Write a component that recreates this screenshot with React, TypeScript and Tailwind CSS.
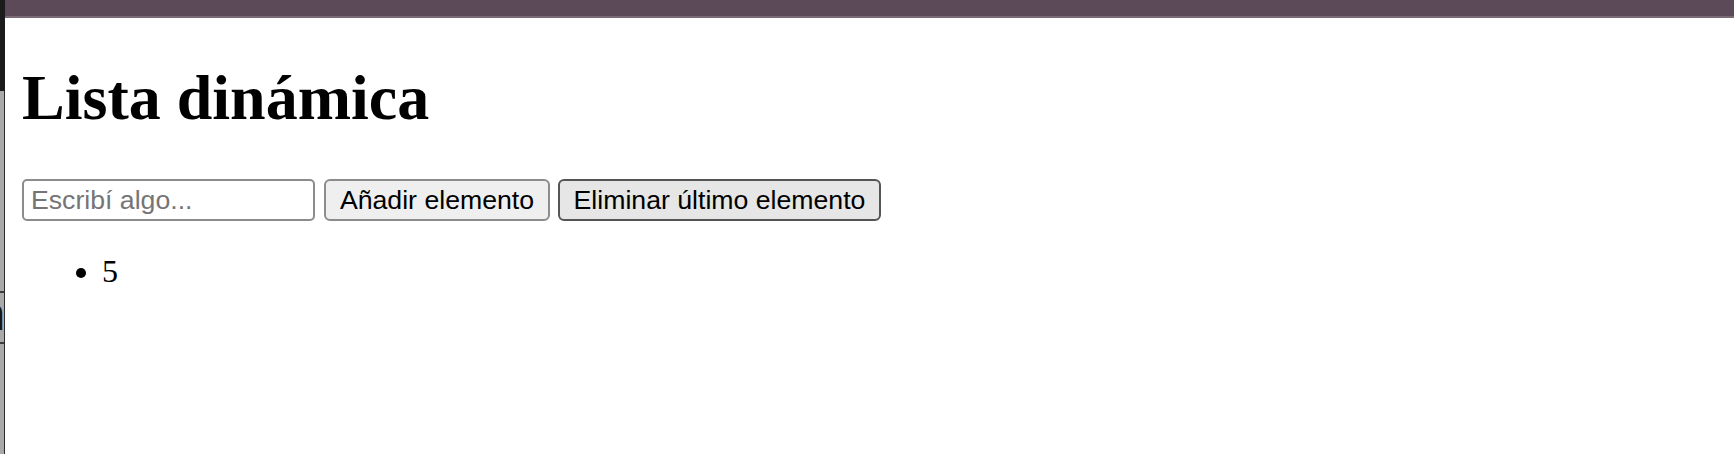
import React from 'react';

export default function App() {
  return (
    <div className="w-[1734px] h-[454px] flex overflow-hidden bg-white">
      {/* Left edge of a neighbouring window */}
      <div className="w-[5px] shrink-0 flex flex-col">
        <div className="h-[91px] bg-[#1b1b1b]" />
        <div className="flex-1 flex flex-col bg-[#a9a9a9] border-r-[1.5px] border-[#2b2b2b]">
          <div className="h-[200px]" />
          <div className="h-[2px] bg-[#3c3c3c]" />
          <div className="h-[49px] flex justify-end items-center overflow-hidden">
            <span
              className="text-[46px] leading-none text-[#151515] -mr-[1px] -mt-[8px]"
              style={{ fontFamily: '"Liberation Sans", Arial, sans-serif' }}
            >
              n
            </span>
          </div>
          <div className="h-[2px] bg-[#3c3c3c]" />
        </div>
      </div>

      {/* Page */}
      <div className="flex-1 flex flex-col">
        <div className="h-[18px] bg-[#5d4a58] border-b-2 border-[#7a6a76]" />

        <main className="pl-[17px]" style={{ fontFamily: '"Liberation Serif", "Times New Roman", serif' }}>
          <h1 className="mt-[43px] text-[64px] font-bold leading-[normal] text-black">Lista dinámica</h1>

          <div
            className="mt-[44px] flex items-start gap-[8px]"
            style={{ fontFamily: '"Liberation Sans", Arial, sans-serif' }}
          >
            <input
              type="text"
              placeholder="Escribí algo..."
              className="w-[293px] h-[42px] pl-[7px] pr-[4px] text-[26.67px] text-black placeholder:text-[#757575] bg-white border-2 border-[#8c8c8c] rounded-[5px] outline-none"
            />
            <button className="ml-[1px] w-[226px] h-[42px] flex items-center justify-center text-[26.67px] text-black bg-[#efefef] border-2 border-[#8c8c8c] rounded-[6px]">
              Añadir elemento
            </button>
            <button className="w-[323px] h-[42px] flex items-center justify-center text-[26.67px] text-black bg-[#e6e6e6] border-2 border-[#555555] rounded-[6px]">
              Eliminar último elemento
            </button>
          </div>

          <ul className="mt-[32px] pl-[80px] list-disc text-[32px] leading-[normal] text-black">
            <li>5</li>
          </ul>
        </main>
      </div>
    </div>
  );
}
